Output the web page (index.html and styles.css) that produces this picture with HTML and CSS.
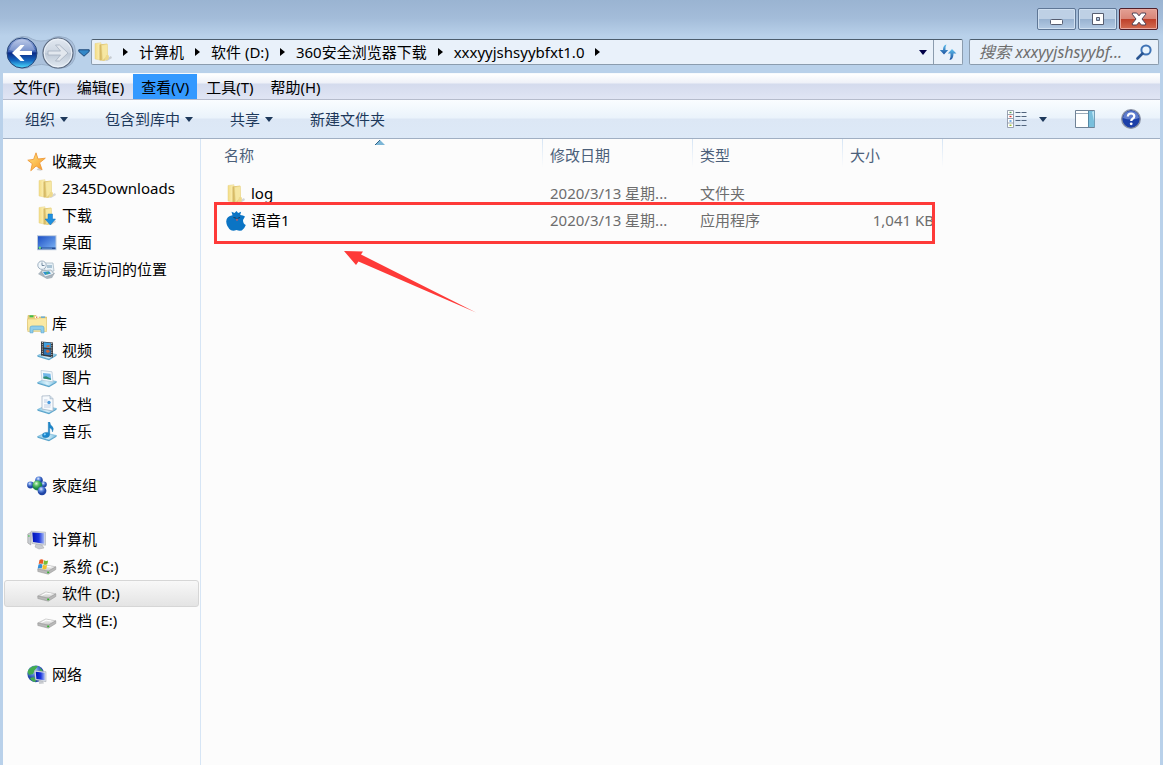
FILE: index.html
```html
<!DOCTYPE html>
<html lang="zh-CN">
<head>
  <meta charset="UTF-8">
  <meta name="viewport" content="width=device-width, initial-scale=1">
  <title>xxxyyjshsyybfxt1.0</title>
  <link rel="stylesheet" href="styles.css">
</head>
<body>

  <!-- Icon set -->
  <svg class="sprite" aria-hidden="true">
    <defs>
      <linearGradient id="g-folder"><stop offset="0" stop-color="#f3dc84"/><stop offset="1" stop-color="#fdf3bf"/></linearGradient>
      <linearGradient id="g-flap"><stop offset="0" stop-color="#d3b661"/><stop offset="1" stop-color="#f5df8c"/></linearGradient>
      <linearGradient id="g-star" x2="1" y2="1"><stop offset="0" stop-color="#ffe98a"/><stop offset="1" stop-color="#f7941d"/></linearGradient>
      <linearGradient id="g-screen" x2="1" y2="1"><stop offset="0" stop-color="#1c4fc4"/><stop offset="1" stop-color="#7db4f5"/></linearGradient>
      <linearGradient id="g-pc" x2="1"><stop offset="0" stop-color="#0012b8"/><stop offset=".55" stop-color="#1b35dd"/><stop offset="1" stop-color="#a9bcf5"/></linearGradient>
      <linearGradient id="g-tray" x2="1"><stop offset="0" stop-color="#8cc9e6"/><stop offset=".5" stop-color="#d9f1fb"/><stop offset="1" stop-color="#7dbfe0"/></linearGradient>
      <linearGradient id="g-drive" x2="0" y2="1"><stop offset="0" stop-color="#fafafa"/><stop offset="1" stop-color="#c4c4c4"/></linearGradient>
      <radialGradient id="g-blue" cx=".4" cy=".3"><stop offset="0" stop-color="#e3edff"/><stop offset=".5" stop-color="#5b86dc"/><stop offset="1" stop-color="#2147a6"/></radialGradient>
      <radialGradient id="g-green" cx=".4" cy=".3"><stop offset="0" stop-color="#e4fbdc"/><stop offset=".5" stop-color="#5cc266"/><stop offset="1" stop-color="#1c8745"/></radialGradient>
      <linearGradient id="g-back" x2="0" y2="1"><stop offset="0" stop-color="#a7b9e2"/><stop offset=".45" stop-color="#3a5fb4"/><stop offset=".5" stop-color="#0b2a86"/><stop offset=".75" stop-color="#1467c0"/><stop offset="1" stop-color="#4fe0ff"/></linearGradient>
      <linearGradient id="g-next" x2="0" y2="1"><stop offset="0" stop-color="#e3e9f1"/><stop offset=".48" stop-color="#ccd5e1"/><stop offset=".52" stop-color="#bec9d7"/><stop offset="1" stop-color="#e2eaf2"/></linearGradient>
      <linearGradient id="g-sync" x2="0" y2="1"><stop offset="0" stop-color="#5fc0ee"/><stop offset="1" stop-color="#1c4f9e"/></linearGradient>
    </defs>

    <symbol id="i-folder" viewBox="0 0 20 20">
      <path d="M11 18l7-4 1 2-5 3z" fill="#999" opacity=".4"/>
      <path d="M2 1.500l6-.8v17.500l-6-1.200z" fill="url(#g-folder)" stroke="#e6d28a" stroke-width=".5"/>
      <path d="M6.500 2.500l7.500-1 .8 12-3.300 5.500-5-.8z" fill="url(#g-flap)"/>
      <path d="M8.500 3.200l6-1v11.500l-5 4.800z" fill="#f6e7a2" stroke="#e6d28a" stroke-width=".5"/>
      <path d="M13 13l3 .5-.5 4-3.500 1z" fill="#eed98b"/>
    </symbol>
    <symbol id="i-download" viewBox="0 0 20 20">
      <use href="#i-folder"/>
      <path d="M11 8h4.500v5H18.500l-5.200 6-5.300-6h3z" fill="#1e90e0" stroke="#1670b8" stroke-width=".5"/>
    </symbol>
    <symbol id="i-star" viewBox="0 0 20 20">
      <path d="M9.500 18l5 .8-1-5z" fill="#888" opacity=".4"/>
      <path d="M9 .8l2 6.200 7.300-.8-5.700 4.600 2.500 7-6-3.800-5.300 4.700 1.500-7L.8 8.200l5.800-.8z" fill="url(#g-star)" stroke="#ee9a3a" stroke-width=".9"/>
    </symbol>
    <symbol id="i-desktop" viewBox="0 0 20 20">
      <path d="M0 2.200h19.500v15H0z" fill="#b9c8dc"/>
      <path d="M1 3.200h17.500v13H1z" fill="url(#g-screen)"/>
      <path d="M1 14.400h17.500v1.800H1z" fill="#234b93"/><circle cx="2.800" cy="14.800" r="1.200" fill="#6fe07d"/>
      <path d="M5 15.300h10" stroke="#80b6f0" stroke-width=".6"/>
    </symbol>
    <symbol id="i-recent" viewBox="0 0 20 20">
      <path d="M7 3h9l1 8-9 1z" fill="#e8f1f7" stroke="#9db1bf" stroke-width=".7"/>
      <path d="M10 5h5v3h-5z" fill="#a9c3d4"/>
      <path d="M1 14l4-4 13 3-3 5-5 1z" fill="#aab5be"/><path d="M4 11l10-1 3 4-9 3z" fill="#e8eef2" stroke="#8d9ba6" stroke-width=".6"/>
      <path d="M6 12l6-.8 2 2.300-6 1.500z" fill="#2f93cf"/><path d="M9 12l3 .8-2 1.500z" fill="#48b06d"/>
      <circle cx="5" cy="5.200" r="4.200" fill="#eff6fb" stroke="#9fb0c0"/><path d="M5 2.500v3h2.500" fill="none" stroke="#57728c" stroke-width=".8"/>
    </symbol>
    <symbol id="i-library" viewBox="0 0 20 20">
      <path d="M1 1.500h8l1 1.500h9.500v13H.5z" fill="#ecd27d" stroke="#d2b558" stroke-width=".6"/>
      <path d="M2.500 1.300h4v2h-4z" fill="#3fbd4d"/><path d="M8 2.400h4v2H8z" fill="#fff"/><path d="M9 2.800h1.300v1H9z" fill="#e64b2a"/><path d="M14 2.500h4v2h-4z" fill="#4aa4e8"/>
      <path d="M.4 5h9.400l1-1h8.900v13.500H.8z" fill="#fae9a4" stroke="#dfc573" stroke-width=".6"/>
      <path d="M3 18.800v-4.800q0-2 2-2h10q2 0 2 2v4.800h-3v-3H6v3z" fill="#8fcdec" stroke="#5ba9d2" stroke-width=".7"/>
    </symbol>
    <symbol id="i-tray" viewBox="0 0 20 20">
      <path d="M.5 14.500l7.500-3.500 11.500 2.500-7.500 4.500z" fill="url(#g-tray)" stroke="#6fb4d6" stroke-width=".6"/>
      <path d="M.5 14.500l11.500 3.500 7.500-4.500v1.200l-7.500 4.600L.5 15.800z" fill="#5aa5cc"/>
    </symbol>
    <symbol id="i-video" viewBox="0 0 20 20">
      <use href="#i-tray"/>
      <path d="M4 .5l12 1v15l-12-2z" fill="#34393f"/>
      <path d="M6.800 1.200l7 .7v5.400l-7-.7z" fill="#3f9fdf"/><path d="M6.800 7.800l7 .8v6L6.800 13.600z" fill="#2d75b5"/>
      <path d="M8.500 10l2.500-1.500 2 2.300-2.500 1.200zM9.500 4.500l3-.5v2.500l-3-.4z" fill="#ce6a3a"/>
      <path d="M5.400 1v13.500M14.800 2v14" stroke="#ddd" stroke-width=".9" stroke-dasharray="1 1.200"/>
    </symbol>
    <symbol id="i-picture" viewBox="0 0 20 20">
      <use href="#i-tray"/>
      <path d="M4 2.500l11 1.300 1 10-11-1.500z" fill="#f5fafd" stroke="#b3c6d5" stroke-width=".7"/>
      <path d="M6 5l7.500.8.7 6L6.500 10.500z" fill="#70b7e8"/><path d="M6.300 8.800l3-.5 4.700 2.400v1l-7.600-1.200z" fill="#2f8d75"/>
    </symbol>
    <symbol id="i-document" viewBox="0 0 20 20">
      <use href="#i-tray"/>
      <path d="M5 1l8-.3 3 3v12.300l-11-2z" fill="#f7fafd" stroke="#9caec0" stroke-width=".7"/>
      <path d="M13 .8v3h3" fill="#d2deea" stroke="#9caec0" stroke-width=".6"/>
      <path d="M7 5h3.500M7 7h3M7 10h7M7 12h6.500" stroke="#b4c1da" stroke-width=".8"/><circle cx="12" cy="7.500" r="1.700" fill="#4b9add"/>
    </symbol>
    <symbol id="i-music" viewBox="0 0 20 20">
      <use href="#i-tray"/>
      <path d="M11.300 0h1.400q.5 3 2.500 4.500t.3 5.500q.2-3-2.800-4.300v7q-.5 3-4 3t-3.400-2.500q.4-2.800 4-2.800h2z" fill="#1b87cc" stroke="#176ea8" stroke-width=".4"/>
      <circle cx="7.800" cy="12.300" r="1.100" fill="#7fd1ff"/>
    </symbol>
    <symbol id="i-homegroup" viewBox="0 0 20 20">
      <circle cx="3.500" cy="9" r="3.400" fill="url(#g-blue)"/><circle cx="12" cy="4.200" r="3.800" fill="url(#g-blue)"/>
      <circle cx="16.800" cy="8.500" r="3" fill="url(#g-blue)"/><circle cx="10.300" cy="9.500" r="4.900" fill="url(#g-green)"/>
      <circle cx="15" cy="14.800" r="4.400" fill="url(#g-blue)"/>
    </symbol>
    <symbol id="i-computer" viewBox="0 0 20 20">
      <path d="M.8 4l3-1.500v12.500l-3-2z" fill="#c9cdd2" stroke="#999" stroke-width=".6"/><path d="M1.400 5h1v2h-1z" fill="#47c451"/>
      <path d="M9 14l6 1 2 3-5 1-4-2z" fill="#c8cbd0" stroke="#a4a7ab" stroke-width=".5"/>
      <path d="M4 1.200l14.500 1v13L5 13.500z" fill="#d9dce2" stroke="#a8acb3" stroke-width=".6"/>
      <path d="M5.300 2.500l12 .8v10.400L6.100 12z" fill="url(#g-pc)"/>
    </symbol>
    <symbol id="i-drive" viewBox="0 0 20 20">
      <path d="M.8 12l8-4 10 1.800-7.500 4.400z" fill="url(#g-drive)" stroke="#b0b0b0" stroke-width=".6"/>
      <path d="M.8 12l10.500 2.200 7.500-4.400v2.700l-7.500 4.700L.8 14.500z" fill="#b9b9b9" stroke="#909090" stroke-width=".5"/>
      <path d="M4.500 11.500l4.800-2.300 5 .8" fill="none" stroke="#fff"/><path d="M10.200 14.600h2v1.600h-2z" fill="#35b32f"/>
    </symbol>
    <symbol id="i-system" viewBox="0 0 20 20">
      <use href="#i-drive"/>
      <path d="M2.500 3q2-1.300 4 0L5.700 7q-2-1-4 0z" fill="#ea5b26"/><path d="M7.100 3.300q2 1.200 4 .2L10.300 7.300q-2 1-4-.1z" fill="#7abd36"/>
      <path d="M1.500 7.500q2-1.200 4 0L4.700 11.500q-2-1.200-4 0z" fill="#328fd8"/><path d="M6.100 7.800q2 1.200 4 .2L9.300 11.900q-2 1-4-.1z" fill="#f3c12d"/>
    </symbol>
    <symbol id="i-network" viewBox="0 0 20 20">
      <circle cx="8.700" cy="8.800" r="8.400" fill="url(#g-blue)"/>
      <path d="M2 4q4-4 9-3l-3 4-2 4-4 1-1.500-3zM3 13l4-1 2 4-1 1q-4-1-5-4zM13 3l3 3-3 1z" fill="#43ad4f"/>
      <path d="M12 15l4 1 1 2.500-5 .5z" fill="#c8cbd0"/>
      <path d="M7.500 5.500l11.500 1.200v10L8.200 14.800z" fill="#dfe3ea" stroke="#999fa8" stroke-width=".5"/>
      <path d="M8.700 6.800l9.200.9v7.600l-8.500-1.400z" fill="url(#g-pc)"/>
    </symbol>
    <symbol id="i-app" viewBox="0 0 20 20">
      <path d="M5.500.8l3 1.300L10.500 0l1.600 2 3-1.300-.9 3.200q3 0 4.800 1.700l-2 3.400q0 4 2.800 5-1.200 3.500-4 5.500-3 .5-5.300-.5-3 1.200-5.500.3Q.5 16 .2 10.500.5 5 6.500 4.200z" fill="#0b74c4"/>
      <path d="M7.500 6.500l3 .8M14 6.500l-2.500.8" stroke="#17395c" stroke-width="1"/><circle cx="11" cy="8.800" r=".9" fill="#ee5252"/>
    </symbol>
  </svg>

  <div class="window">

    <header class="titlebar">
      <button class="win-btn" aria-label="最小化">
        <svg width="16" height="16" viewBox="0 0 16 16"><rect x="1.500" y="8.500" width="12" height="5" rx="1" fill="#fff" stroke="#565d70"/></svg>
      </button>
      <button class="win-btn" aria-label="最大化">
        <svg width="16" height="16" viewBox="0 0 16 16"><path d="M2.500 2.500h11v11h-11zM6.500 6.500v3h3v-3z" fill="#fff" fill-rule="evenodd" stroke="#565d70"/></svg>
      </button>
      <button class="win-btn win-close" aria-label="关闭">
        <svg width="16" height="16" viewBox="0 0 16 16"><path d="M1.500 2h4.200L8 4.800 10.300 2h4.200l.3 1.200L11 8l3.800 4.800-.3 1.200h-4.200L8 11.200 5.700 14H1.500l-.3-1.200L5 8 1.200 3.200z" fill="#fff" stroke="#4e4153"/></svg>
      </button>
    </header>

    <div class="navbar">
      <div class="history">
        <svg class="history-pill" viewBox="0 0 72 36" aria-hidden="true">
          <path d="M17 1.500q6 0 10 3 8 3.500 18 0 4-3 9-3 17 1 17 16.500T54 34.500q-5 0-9-3-9-2.500-18 0-5 3-10 3Q1 33 1 18T17 1.500z" fill="#abc1dc" stroke="#98adc7"/>
        </svg>
        <button class="round-btn" aria-label="后退">
          <svg viewBox="0 0 32 32"><circle cx="16" cy="16" r="15" fill="url(#g-back)" stroke="#274679"/><path d="M3 13Q7 2.500 16 2.500T29 13Q16 17 3 13z" fill="#fff" opacity=".3"/><path d="M6 16l8.500-8h4l-5 6H26v4H13.500l5 6h-4z" fill="#fff"/></svg>
        </button>
        <button class="round-btn" aria-label="前进">
          <svg viewBox="0 0 32 32"><circle cx="16" cy="16" r="15" fill="url(#g-next)" stroke="#5d6b80" stroke-width="1.200"/><circle cx="16" cy="16" r="13.800" fill="none" stroke="#edf3fa"/><path d="M26 16l-8.500-8h-4l5 6H6v4h12.500l-5 6h4z" fill="#e2e7ee" stroke="#a5b0bf" stroke-width=".8"/></svg>
        </button>
        <button class="recent-btn" aria-label="最近的页面">
          <svg width="12" height="8" viewBox="0 0 12 8"><path d="M.8.800h10.400v1.700L6 7.200.8 2.500z" fill="#3287c7" stroke="#1d4778"/></svg>
        </button>
      </div>

      <nav class="address" aria-label="地址">
        <svg class="icon"><use href="#i-folder"/></svg>
        <ol class="crumbs">
          <li><a href="#">计算机</a></li>
          <li><a href="#">软件 (D:)</a></li>
          <li><a href="#">360安全浏览器下载</a></li>
          <li><a href="#">xxxyyjshsyybfxt1.0</a></li>
          <li></li>
        </ol>
        <button class="address-drop" aria-label="历史地址"><span class="caret"></span></button>
        <button class="refresh" aria-label="刷新">
          <svg width="18" height="18" viewBox="0 0 18 18"><path d="M7.500 1.500Q4 2 4 7H.8l4.200 4.500L9.200 7H6.500q-.5-3 1-5.500z" fill="url(#g-sync)"/><path d="M10.500 17q4-.5 4-6.500h2.900L13 6 8.800 10.500h2.700q.5 3.500-1 6.500z" fill="url(#g-sync)"/></svg>
        </button>
      </nav>

      <form class="search">
        <input class="search-input" type="text" aria-label="搜索" placeholder="搜索 xxxyyjshsyybf...">
        <svg class="search-icon" width="16" height="16" viewBox="0 0 16 16"><circle cx="10" cy="6" r="4.600" fill="#e9f4fd" stroke="#3f73b5" stroke-width="2"/><path d="M6.500 9.500L1.500 14.500" stroke="#2a5591" stroke-width="2.600" stroke-linecap="round"/></svg>
      </form>
    </div>

    <nav class="menubar" aria-label="菜单">
      <button class="menu-item">文件(F)</button>
      <button class="menu-item">编辑(E)</button>
      <button class="menu-item active">查看(V)</button>
      <button class="menu-item">工具(T)</button>
      <button class="menu-item">帮助(H)</button>
    </nav>

    <div class="toolbar">
      <button class="tool">组织<span class="caret"></span></button>
      <button class="tool">包含到库中<span class="caret"></span></button>
      <button class="tool">共享<span class="caret"></span></button>
      <button class="tool">新建文件夹</button>
      <div class="tool-views">
        <button class="tool-icon view-btn" aria-label="更改视图">
          <svg width="20" height="18" viewBox="0 0 20 18">
            <path d="M.5.500h6v17h-6zM.5 4.500h6M.5 8.500h6M.5 13h6" fill="#fff" stroke="#8e99a8" stroke-width=".9"/>
            <path d="M2.500 2.500h2" stroke="#5aa05a" stroke-width="1.400"/><path d="M2.500 6.500h2" stroke="#e0332b" stroke-width="1.400"/><path d="M2.500 11h2" stroke="#3b8ee0" stroke-width="1.400"/><path d="M2.500 15.300h2" stroke="#9dc02c" stroke-width="1.400"/>
            <path d="M8.500 2.500h11M8.500 6.500h11M8.500 10.500h11M8.500 15.500h11" stroke="#51647d" stroke-dasharray="5 1"/>
          </svg>
          <span class="caret"></span>
        </button>
        <button class="tool-icon" aria-label="预览窗格">
          <svg width="20" height="18" viewBox="0 0 20 18"><path d="M.5.500h19v17H.5z" fill="#fff" stroke="#6f8296"/><path d="M1 3.500h13" stroke="#9aabba"/><path d="M14 1h5.500v16H14z" fill="#79bfdc"/><path d="M13.500 1v16" stroke="#5588a5"/><path d="M17 2l2-1v10z" fill="#bfe6f5"/></svg>
        </button>
        <button class="tool-icon" aria-label="帮助">
          <svg width="20" height="20" viewBox="0 0 20 20"><circle cx="10" cy="10" r="9.300" fill="#1b3fa8" stroke="#8b93a3" stroke-width="1.300"/><path d="M2 9q1-7 8-7t8 7q-8 3-16 0z" fill="#7c98dd" opacity=".7"/><path d="M6.800 7.500q.2-3 3.300-3t3.200 2.700q0 1.500-1.700 2.500-1.400.9-1.400 2.300" fill="none" stroke="#fff" stroke-width="2.200"/><circle cx="10.200" cy="14.800" r="1.400" fill="#fff"/></svg>
        </button>
      </div>
    </div>

    <div class="content">
      <aside class="sidebar">
        <ul class="tree">
          <li><a class="node root" href="#"><svg class="icon"><use href="#i-star"/></svg>收藏夹</a></li>
          <li><a class="node" href="#"><svg class="icon"><use href="#i-folder"/></svg>2345Downloads</a></li>
          <li><a class="node" href="#"><svg class="icon"><use href="#i-download"/></svg>下载</a></li>
          <li><a class="node" href="#"><svg class="icon"><use href="#i-desktop"/></svg>桌面</a></li>
          <li><a class="node" href="#"><svg class="icon"><use href="#i-recent"/></svg>最近访问的位置</a></li>
        </ul>
        <ul class="tree">
          <li><a class="node root" href="#"><svg class="icon"><use href="#i-library"/></svg>库</a></li>
          <li><a class="node" href="#"><svg class="icon"><use href="#i-video"/></svg>视频</a></li>
          <li><a class="node" href="#"><svg class="icon"><use href="#i-picture"/></svg>图片</a></li>
          <li><a class="node" href="#"><svg class="icon"><use href="#i-document"/></svg>文档</a></li>
          <li><a class="node" href="#"><svg class="icon"><use href="#i-music"/></svg>音乐</a></li>
        </ul>
        <ul class="tree">
          <li><a class="node root" href="#"><svg class="icon"><use href="#i-homegroup"/></svg>家庭组</a></li>
        </ul>
        <ul class="tree">
          <li><a class="node root" href="#"><svg class="icon"><use href="#i-computer"/></svg>计算机</a></li>
          <li><a class="node" href="#"><svg class="icon"><use href="#i-system"/></svg>系统 (C:)</a></li>
          <li><a class="node selected" href="#"><svg class="icon"><use href="#i-drive"/></svg>软件 (D:)</a></li>
          <li><a class="node" href="#"><svg class="icon"><use href="#i-drive"/></svg>文档 (E:)</a></li>
        </ul>
        <ul class="tree">
          <li><a class="node root" href="#"><svg class="icon"><use href="#i-network"/></svg>网络</a></li>
        </ul>
      </aside>

      <main class="files">
        <table class="file-table">
          <thead>
            <tr>
              <th class="col-name">名称
                <svg class="sort" width="10" height="5" viewBox="0 0 10 5"><path d="M0 5l5-5 5 5z" fill="#7cb6d6"/><path d="M0 5l5-5" stroke="#2f6387"/></svg>
              </th>
              <th class="col-date">修改日期</th>
              <th class="col-type">类型</th>
              <th class="col-size">大小</th>
            </tr>
          </thead>
          <tbody>
            <tr>
              <td><span class="file"><svg class="icon"><use href="#i-folder"/></svg>log</span></td>
              <td>2020/3/13 星期...</td>
              <td>文件夹</td>
              <td class="size"></td>
            </tr>
            <tr>
              <td><span class="file"><svg class="icon"><use href="#i-app"/></svg>语音1</span></td>
              <td>2020/3/13 星期...</td>
              <td>应用程序</td>
              <td class="size">1,041 KB</td>
            </tr>
          </tbody>
        </table>

        <!-- Red annotation over the list -->
        <div class="mark-box"></div>
        <svg class="mark-arrow" width="132" height="62" viewBox="0 0 132 62"><path d="M0 0l19 .5-2 3L132 61.500 14.500 10.500 12 14z" fill="#fe3a38"/></svg>
      </main>
    </div>
  </div>

</body>
</html>
```
FILE: styles.css
```css
:root {
  --frame: #b9d1ea;
  --text: #000000;
  --muted: #6d6d6d;
  --head: #4c607a;
  --tool: #1e395b;
  --line: #d6e5f5;
  --red: #fe3a38;
}

* {
  margin: 0;
  padding: 0;
  box-sizing: border-box;
}

body {
  font-family: "Noto Sans", "Noto Sans CJK SC", sans-serif;
  font-size: 15px;
  line-height: 27px;
  color: var(--text);
  background: var(--frame);
}

button {
  font: inherit;
  color: inherit;
  background: none;
  border: none;
}

a {
  color: inherit;
  text-decoration: none;
}

ul,
ol {
  list-style: none;
}

svg {
  display: block;
  flex: none;
}

.sprite {
  position: absolute;
  width: 0;
  height: 0;
}

.icon {
  width: 20px;
  height: 20px;
}

.caret {
  border: 4px solid transparent;
  border-top: 5px solid currentColor;
  border-bottom: 0;
}

.window {
  display: flex;
  flex-direction: column;
  min-height: 100vh;
  padding: 0 3px;
  background: linear-gradient(#9ab4d2, #a3bcd9 18px, var(--frame) 36px);
}

/* Title bar */
.titlebar {
  display: flex;
  justify-content: flex-end;
  gap: 2px;
  height: 35px;
  padding: 8px 2px 0;
}

.win-btn {
  display: flex;
  align-items: center;
  justify-content: center;
  width: 39px;
  height: 22px;
  border: 1px solid #5f7796;
  border-radius: 2px;
  box-shadow: inset 0 0 0 1px #d0e0f1;
  background: linear-gradient(#bed0e5 48%, #98b2d0 50%, #b4cbe4);
}

.win-close {
  border-color: #50202a;
  box-shadow: inset 0 0 0 1px #e9a99f;
  background: linear-gradient(#e3a094, #d98678 48%, #bd3f29 50%, #d36d52);
}

/* Navigation bar */
.navbar {
  display: flex;
  align-items: flex-start;
  height: 38px;
  padding: 0 1px 0 3px;
}

.history {
  position: relative;
  display: flex;
  align-items: center;
  gap: 4px;
  width: 85px;
  height: 35px;
}

.history-pill {
  position: absolute;
  left: 0;
  top: 0;
  width: 71px;
  height: 35px;
}

.round-btn {
  position: relative;
  width: 32px;
  height: 32px;
}

.address {
  display: flex;
  align-items: center;
  flex: 1;
  height: 26px;
  margin-top: 4px;
  padding-left: 1px;
  background: #e9f1fa;
  border: 1px solid #8b9cae;
  border-top-color: #4c5d6d;
  border-radius: 2px;
}

.crumbs {
  display: flex;
  flex: 1;
  align-items: center;
  gap: 1px;
  line-height: 24px;
}

.crumbs li {
  display: flex;
  align-items: center;
  gap: 11px;
  padding-left: 10px;
}

.crumbs li:before {
  content: "";
  border: 4px solid transparent;
  border-left: 5px solid #000;
  border-right: 0;
}

.address-drop,
.refresh {
  display: flex;
  align-items: center;
  justify-content: center;
  height: 24px;
}

.address-drop {
  width: 20px;
  color: #000048;
}

.refresh {
  width: 29px;
  border-left: 1px solid #8b9cae;
}

.search {
  display: flex;
  align-items: center;
  width: 190px;
  height: 26px;
  margin: 4px 0 0 6px;
  padding: 0 6px 0 9px;
  background: #e9f1fa;
  border: 1px solid #8b9cae;
  border-top-color: #4c5d6d;
  border-radius: 2px;
}

.search-input {
  flex: 1;
  min-width: 0;
  height: 24px;
  font: inherit;
  font-size: 16px;
  font-style: italic;
  background: none;
  border: none;
  outline: none;
}

.search-input::placeholder {
  color: var(--muted);
}

/* Menu bar */
.menubar {
  display: flex;
  gap: 1px;
  height: 27px;
  padding-left: 2px;
  background: linear-gradient(#ffffff, #eef1f8 9px, #d4dbed 10px, #e0e5f4);
  border-top: 1px solid #f7fafd;
  border-bottom: 1px solid #b6bccc;
}

.menu-item {
  padding: 0 8px;
  line-height: 26px;
}

.menu-item.active {
  background: #3399ff;
}

/* Toolbar */
.toolbar {
  display: flex;
  align-items: center;
  gap: 37px;
  height: 39px;
  padding: 0 19px 0 22px;
  color: var(--tool);
  background: linear-gradient(#fafdff, #eaf3fb 18px, #dce7f5 19px, #dde9f7);
  border-bottom: 1px solid #a0afc3;
}

.tool {
  display: flex;
  align-items: center;
  gap: 5px;
}

.tool-views {
  display: flex;
  align-items: center;
  gap: 26px;
  margin-left: auto;
}

.tool-icon {
  display: flex;
  align-items: center;
}

.view-btn {
  gap: 12px;
  margin-right: 2px;
}

/* Content */
.content {
  display: flex;
  flex: 1;
  background: #fcfcfc;
}

.sidebar {
  width: 198px;
  padding: 9px 1px;
  border-right: 1px solid var(--line);
}

.tree {
  margin-bottom: 27px;
}

.node {
  display: flex;
  align-items: center;
  gap: 5px;
  height: 27px;
  padding-left: 32px;
  border: 1px solid transparent;
  border-radius: 3px;
}

.node.root {
  padding-left: 22px;
}

.node.selected {
  background: linear-gradient(#f8f8f8, #e4e4e4);
  border-color: #d6d6d6;
}

/* File list */
.files {
  position: relative;
  flex: 1;
}

.file-table {
  width: 742px;
  table-layout: fixed;
  border-collapse: collapse;
}

.file-table th {
  height: 41px;
  padding: 3px 7px 0;
  font-weight: 400;
  text-align: left;
  vertical-align: top;
  color: var(--head);
  background: linear-gradient(var(--line), #fcfcfc) right top / 1px 28px no-repeat;
}

.file-table td {
  height: 27px;
  padding: 0 9px 0 7px;
  color: var(--muted);
  white-space: nowrap;
}

.file-table .col-name {
  position: relative;
  width: 342px;
  padding-left: 23px;
}

.col-date,
.col-type {
  width: 150px;
}

.col-size {
  width: 100px;
}

.sort {
  position: absolute;
  left: 51%;
  top: 1px;
}

.file {
  display: flex;
  align-items: center;
  gap: 5px;
  padding-left: 18px;
  color: var(--text);
}

.file-table .size {
  text-align: right;
}

/* Annotation */
.mark-box {
  position: absolute;
  left: 13px;
  top: 63px;
  width: 721px;
  height: 42px;
  border: 3px solid var(--red);
}

.mark-arrow {
  position: absolute;
  left: 143px;
  top: 112px;
}
```
